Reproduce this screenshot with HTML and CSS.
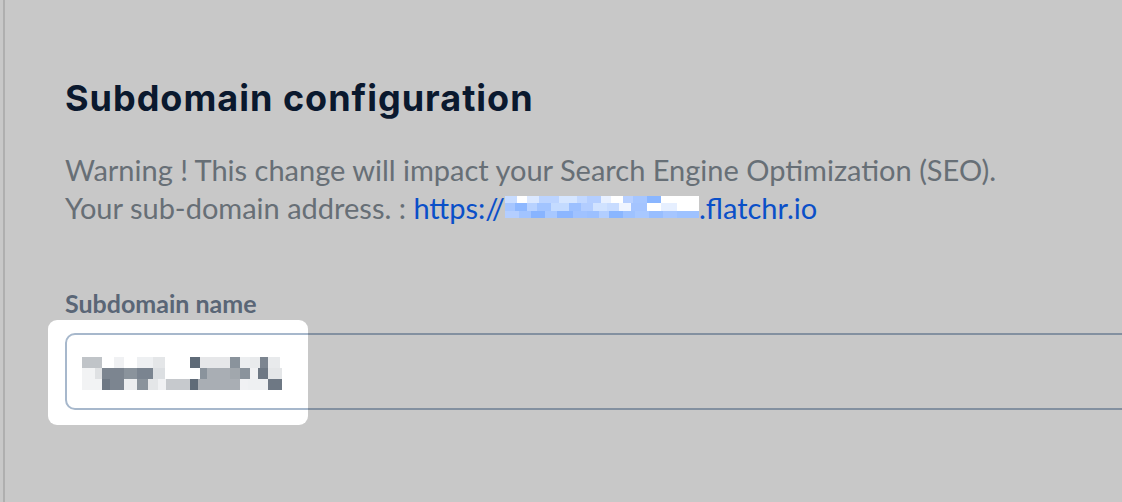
FILE: index.html
```html
<!DOCTYPE html>
<html lang="en">
<head>
<meta charset="utf-8">
<title>Subdomain configuration</title>
<link rel="stylesheet" href="styles.css">
</head>
<body>
<div class="frame">
  <section class="panel">
    <h1 class="title">Subdomain configuration</h1>
    <p class="warning">Warning ! This change will impact your Search Engine Optimization (SEO).<br>Your sub-domain address. : <a class="link" href="#">https://<span class="redact"><svg width="194" height="22" viewBox="0 0 194 22">
      <rect x="0" y="0" width="194" height="22" fill="#b6d0ff"/>
      <rect x="0" y="0" width="12" height="7" fill="#c8dcff"/>
      <rect x="12" y="0" width="10" height="7" fill="#ffffff"/>
      <rect x="22" y="0" width="12" height="7" fill="#dbe8ff"/>
      <rect x="34" y="0" width="20" height="7" fill="#bcd4ff"/>
      <rect x="54" y="0" width="18" height="7" fill="#d6e6ff"/>
      <rect x="72" y="0" width="10" height="7" fill="#c2d8ff"/>
      <rect x="82" y="0" width="14" height="7" fill="#b4ceff"/>
      <rect x="96" y="0" width="10" height="7" fill="#e8f0ff"/>
      <rect x="106" y="0" width="12" height="7" fill="#ffffff"/>
      <rect x="118" y="0" width="10" height="7" fill="#b8d0ff"/>
      <rect x="128" y="0" width="14" height="7" fill="#a6c6ff"/>
      <rect x="142" y="0" width="14" height="7" fill="#8ab6ff"/>
      <rect x="156" y="0" width="38" height="7" fill="#ffffff"/>
      <rect x="0" y="7" width="10" height="8" fill="#a6c6ff"/>
      <rect x="10" y="7" width="12" height="8" fill="#8eb8ff"/>
      <rect x="22" y="7" width="10" height="8" fill="#b8d2ff"/>
      <rect x="32" y="7" width="14" height="8" fill="#a2c4ff"/>
      <rect x="46" y="7" width="18" height="8" fill="#c4dbff"/>
      <rect x="64" y="7" width="12" height="8" fill="#9cc0ff"/>
      <rect x="76" y="7" width="12" height="8" fill="#b2cdff"/>
      <rect x="88" y="7" width="14" height="8" fill="#d0e2ff"/>
      <rect x="102" y="7" width="12" height="8" fill="#c8dcff"/>
      <rect x="114" y="7" width="12" height="8" fill="#f0f5ff"/>
      <rect x="126" y="7" width="16" height="8" fill="#a4c4ff"/>
      <rect x="142" y="7" width="14" height="8" fill="#ffffff"/>
      <rect x="156" y="7" width="16" height="8" fill="#e6efff"/>
      <rect x="172" y="7" width="22" height="8" fill="#ffffff"/>
      <rect x="0" y="15" width="14" height="7" fill="#b4ceff"/>
      <rect x="14" y="15" width="12" height="7" fill="#a2c4ff"/>
      <rect x="26" y="15" width="14" height="7" fill="#88b4ff"/>
      <rect x="40" y="15" width="12" height="7" fill="#a8c8ff"/>
      <rect x="52" y="15" width="16" height="7" fill="#8cb6ff"/>
      <rect x="68" y="15" width="14" height="7" fill="#a0c2ff"/>
      <rect x="82" y="15" width="12" height="7" fill="#9cc0ff"/>
      <rect x="94" y="15" width="10" height="7" fill="#b2ceff"/>
      <rect x="104" y="15" width="14" height="7" fill="#8ab6ff"/>
      <rect x="118" y="15" width="12" height="7" fill="#9ec2ff"/>
      <rect x="130" y="15" width="14" height="7" fill="#a8c8ff"/>
      <rect x="144" y="15" width="14" height="7" fill="#98beff"/>
      <rect x="158" y="15" width="14" height="7" fill="#a6c6ff"/>
      <rect x="172" y="15" width="22" height="7" fill="#9ec2ff"/>
    </svg></span>.flatchr.io</a></p>
    <label class="label" for="sub">Subdomain name</label>
    <div class="field">
      <div class="input" id="sub">
        <svg class="mosaic" width="200" height="33" viewBox="0 0 200 33">
          <rect x="0" y="0" width="20" height="11" fill="#c0c4c8"/>
          <rect x="20" y="0" width="12" height="11" fill="#ffffff"/>
          <rect x="32" y="0" width="10" height="11" fill="#f0f1f3"/>
          <rect x="42" y="0" width="13" height="11" fill="#ffffff"/>
          <rect x="55" y="0" width="16" height="11" fill="#eef0f2"/>
          <rect x="71" y="0" width="12" height="11" fill="#e4e6e8"/>
          <rect x="83" y="0" width="25" height="11" fill="#ffffff"/>
          <rect x="108" y="0" width="10" height="11" fill="#5f6b78"/>
          <rect x="118" y="0" width="30" height="11" fill="#e6e7e9"/>
          <rect x="148" y="0" width="10" height="11" fill="#8a939c"/>
          <rect x="158" y="0" width="10" height="11" fill="#eceef0"/>
          <rect x="168" y="0" width="10" height="11" fill="#e8eaec"/>
          <rect x="178" y="0" width="8" height="11" fill="#7c8590"/>
          <rect x="186" y="0" width="12" height="11" fill="#e8eaec"/>
          <rect x="0" y="11" width="13" height="11" fill="#f2f3f4"/>
          <rect x="13" y="11" width="7" height="11" fill="#dfe1e3"/>
          <rect x="20" y="11" width="22" height="11" fill="#7c8590"/>
          <rect x="42" y="11" width="13" height="11" fill="#8a939c"/>
          <rect x="55" y="11" width="16" height="11" fill="#7a8490"/>
          <rect x="71" y="11" width="12" height="11" fill="#dcdfe2"/>
          <rect x="83" y="11" width="35" height="11" fill="#ffffff"/>
          <rect x="118" y="11" width="7" height="11" fill="#8a939c"/>
          <rect x="125" y="11" width="23" height="11" fill="#a9aeb4"/>
          <rect x="148" y="11" width="10" height="11" fill="#a1a7ad"/>
          <rect x="158" y="11" width="10" height="11" fill="#8a939c"/>
          <rect x="168" y="11" width="8" height="11" fill="#f0f1f3"/>
          <rect x="176" y="11" width="10" height="11" fill="#6e7884"/>
          <rect x="186" y="11" width="14" height="11" fill="#e4e6e8"/>
          <rect x="0" y="22" width="20" height="11" fill="#f2f3f4"/>
          <rect x="20" y="22" width="8" height="11" fill="#6e7884"/>
          <rect x="28" y="22" width="14" height="11" fill="#7c8590"/>
          <rect x="42" y="22" width="13" height="11" fill="#eceef0"/>
          <rect x="55" y="22" width="11" height="11" fill="#8a939c"/>
          <rect x="66" y="22" width="10" height="11" fill="#e4e6e8"/>
          <rect x="76" y="22" width="8" height="11" fill="#f0f1f3"/>
          <rect x="84" y="22" width="24" height="11" fill="#c6c9cd"/>
          <rect x="108" y="22" width="8" height="11" fill="#5f6b78"/>
          <rect x="116" y="22" width="42" height="11" fill="#a9aeb4"/>
          <rect x="158" y="22" width="8" height="11" fill="#f0f1f3"/>
          <rect x="166" y="22" width="20" height="11" fill="#eef0f2"/>
          <rect x="186" y="22" width="14" height="11" fill="#6e7884"/>
        </svg>
      </div>
      <div class="spotlight"></div>
    </div>
  </section>
</div>
</body>
</html>
```
FILE: styles.css
```css
html, body {
  margin: 0;
  padding: 0;
  background: #ffffff;
  overflow: hidden;
  height: 100%;
}

.frame {
  margin-left: 3px;
  border-left: 2px solid #e0e0e0;
  height: 100%;
  box-sizing: border-box;
}

.panel {
  padding: 76px 0 0 60px;
  font-family: "Lato", "Liberation Sans", sans-serif;
}

.title {
  margin: 0;
  font-family: "Inter", "Liberation Sans", sans-serif;
  font-weight: 700;
  font-size: 36px;
  line-height: 44px;
  letter-spacing: 1px;
  color: #0e213b;
}

.warning {
  margin: 31px 0 0 0;
  font-size: 29px;
  line-height: 38px;
  color: #848e97;
}

.link {
  color: #0e66ff;
  text-decoration: none;
}

.redact {
  position: relative;
  z-index: 10;
  display: inline-block;
  vertical-align: 1px;
  line-height: 0;
}

.label {
  display: block;
  margin-top: 61px;
  font-weight: 700;
  font-size: 25px;
  line-height: 30px;
  color: #738297;
}

.field {
  position: relative;
  margin-top: 15px;
}

.input {
  width: 1200px;
  height: 77px;
  box-sizing: border-box;
  border: 2px solid #a7b8cc;
  border-radius: 10px;
  background: #ffffff;
  padding: 22px 0 0 15px;
}

.mosaic {
  display: block;
}

.spotlight {
  position: absolute;
  left: -17px;
  top: -13px;
  width: 260px;
  height: 105px;
  border-radius: 9px;
  box-shadow: 0 0 0 3000px rgba(0, 0, 0, 0.216);
  pointer-events: none;
}
```
